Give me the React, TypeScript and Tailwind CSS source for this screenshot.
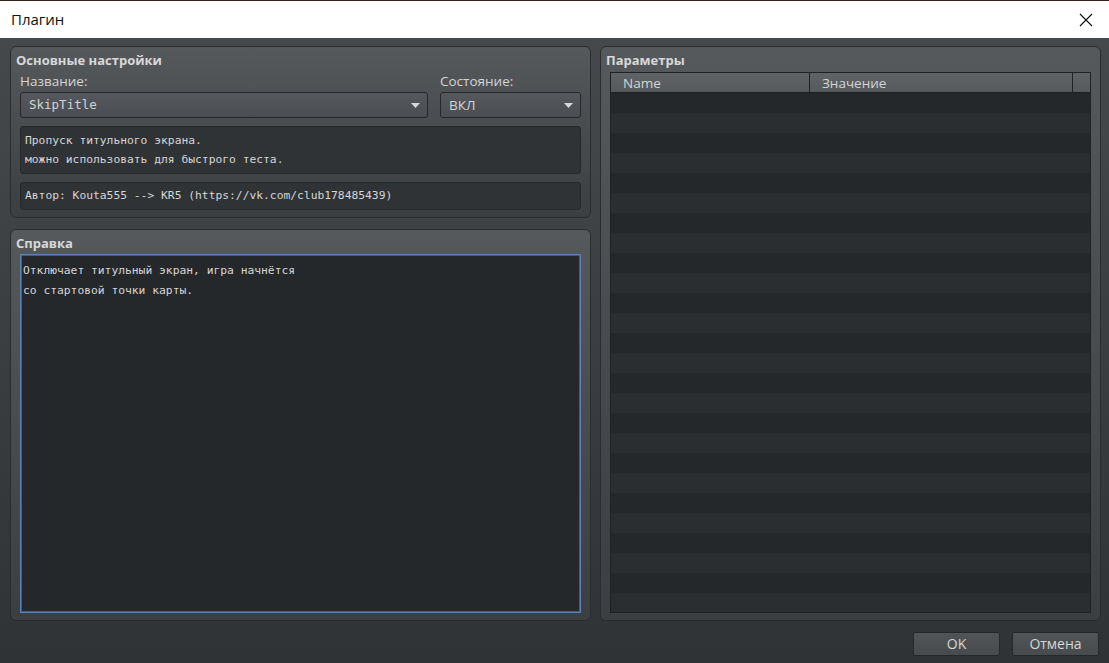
import React from "react";

const sans = "font-['Open_Sans','Noto_Sans',sans-serif]";
const mono = "font-['DejaVu_Sans_Mono',monospace]";

function Caret() {
  return (
    <svg width="9" height="5" viewBox="0 0 9 5" className="shrink-0">
      <path d="M0 0 H9 L4.5 5 Z" fill="#d8d8d8" />
    </svg>
  );
}

function Select({ value, monoText }: { value: string; monoText?: boolean }) {
  return (
    <div className="flex h-[26px] items-center justify-between rounded-[3px] border border-[#25272a] bg-gradient-to-b from-[#55585c] to-[#4a4d51] pl-[8px] pr-[7px]">
      <span className={`${monoText ? `${mono} text-[12.5px]` : "text-[13.5px]"} text-[#d4d4d4]`}>{value}</span>
      <Caret />
    </div>
  );
}

function Panel({ title, className, children }: { title: string; className?: string; children: React.ReactNode }) {
  return (
    <section
      className={`flex flex-col rounded-[6px] border border-[#2a2c2f] bg-gradient-to-b from-[#56595c] to-[#3c3f42] px-[9px] pb-[7px] ${className ?? ""}`}
    >
      <h2 className="-ml-[4px] pt-[4px] text-[13px] font-bold leading-[18px] text-[#d8d8d8]">{title}</h2>
      {children}
    </section>
  );
}

function MainSettings() {
  return (
    <Panel title="Основные настройки" className="h-[172px]">
      <div className="mt-[4px] flex gap-[12px]">
        <div className="flex w-[408px] flex-col">
          <label className="mb-[3px] text-[13.5px] leading-[16px] text-[#d4d4d4]">Название:</label>
          <Select value="SkipTitle" monoText />
        </div>
        <div className="flex flex-1 flex-col">
          <label className="mb-[3px] text-[13.5px] leading-[16px] text-[#d4d4d4]">Состояние:</label>
          <Select value="ВКЛ" />
        </div>
      </div>
      <div className={`mt-[8px] h-[48px] rounded-[3px] border border-[#25272a] bg-[#303336] px-[4px] pt-[4px] ${mono} text-[11.3px] leading-[19px] text-[#d6d6d6]`}>
        <p>Пропуск титульного экрана.</p>
        <p>можно использовать для быстрого теста.</p>
      </div>
      <div className={`mt-[8px] flex h-[28px] items-center rounded-[3px] border border-[#25272a] bg-[#303336] px-[4px] ${mono} text-[11.3px] text-[#d6d6d6]`}>
        Автор: Kouta555 --&gt; KR5 (https://vk.com/club178485439)
      </div>
    </Panel>
  );
}

function Help() {
  return (
    <Panel title="Справка" className="flex-1">
      <div className={`mt-[2px] flex-1 border border-[#5a82b5] bg-[#25282b] px-[2px] pt-[6px] ${mono} text-[11.3px] leading-[20px] text-[#d6d6d6] shadow-[inset_0_0_0_1px_#3d5f88]`}>
        <p>Отключает титульный экран, игра начнётся</p>
        <p>со стартовой точки карты.</p>
      </div>
    </Panel>
  );
}

function Params() {
  const rows = Array.from({ length: 26 }, (_, i) => i);
  return (
    <Panel title="Параметры" className="w-[501px]">
      <div className="mt-[3px] flex flex-1 flex-col overflow-hidden border border-[#1f2123] bg-[#25282a]">
        <div className="flex h-[20px] shrink-0 border-b border-[#1f2123] bg-gradient-to-b from-[#5f6366] to-[#565a5d] text-[13.5px] leading-[21px] text-[#d4d4d4]">
          <div className="w-[199px] border-r border-[#1f2123] pl-[12px]">Name</div>
          <div className="w-[263px] border-r border-[#1f2123] pl-[12px]">Значение</div>
          <div className="flex-1" />
        </div>
        {rows.map((i) => (
          <div key={i} className={`h-[20px] shrink-0 ${i % 2 === 0 ? "bg-[#25282a]" : "bg-[#2b2e31]"}`} />
        ))}
      </div>
    </Panel>
  );
}

function Button({ label }: { label: string }) {
  return (
    <button className="h-[24px] w-[87px] rounded-[2px] border border-[#25272a] bg-gradient-to-b from-[#505457] to-[#474b4e] text-[14px] leading-[20px] text-[#d6d6d6]">
      {label}
    </button>
  );
}

export default function App() {
  return (
    <div className={`${sans} flex h-[663px] w-[1109px] flex-col overflow-hidden bg-[#2a2c2e]`}>
      <div className="flex h-[38px] items-center justify-between border-t border-[#3a2020] bg-white pl-[11px] pr-[16px]">
        <span className="text-[15px] text-[#111]">Плагин</span>
        <svg width="14" height="14" viewBox="0 0 14 14">
          <path d="M1 1 L13 13 M13 1 L1 13" stroke="#111" strokeWidth="1.1" />
        </svg>
      </div>
      <div className="flex flex-1 flex-col bg-gradient-to-b from-[#46494c] to-[#2f3336] pl-[10px] pr-[8px] pt-[8px]">
        <div className="flex h-[575px] gap-[9px]">
          <div className="flex w-[581px] flex-col gap-[11px]">
            <MainSettings />
            <Help />
          </div>
          <Params />
        </div>
        <div className="mt-[11px] flex justify-end gap-[12px] pr-[2px]">
          <Button label="OK" />
          <Button label="Отмена" />
        </div>
      </div>
    </div>
  );
}
